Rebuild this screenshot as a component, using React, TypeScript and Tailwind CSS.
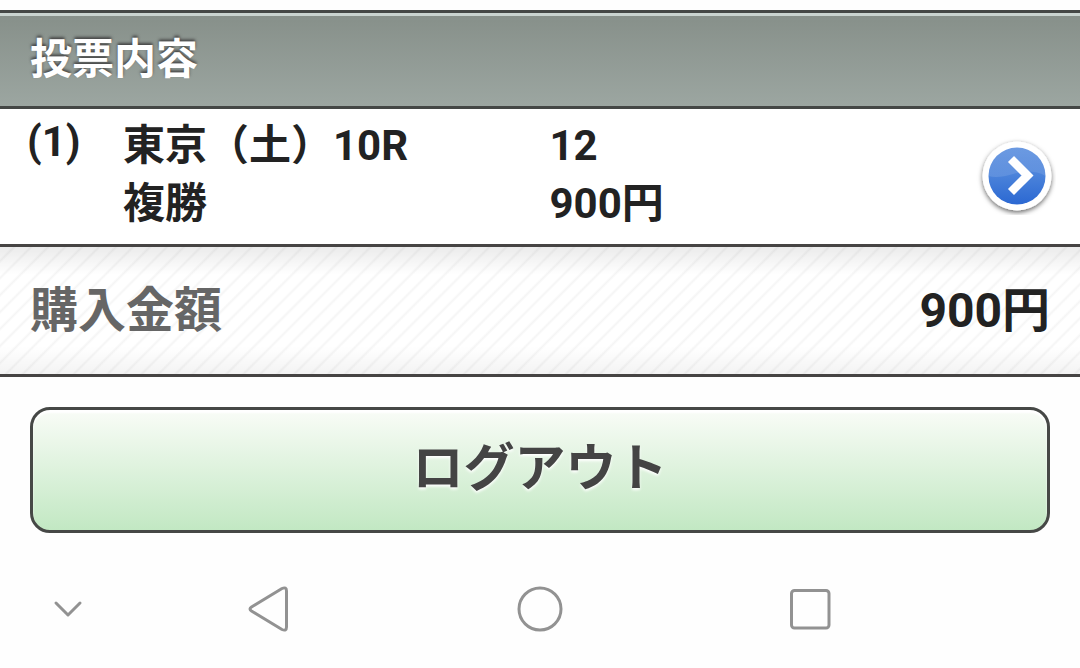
interface Bet {
  no: number;
  race: string;
  horse: string;
  type: string;
  amount: string;
}

const BETS: Bet[] = [
  { no: 1, race: '東京（土）10R', horse: '12', type: '複勝', amount: '900円' },
];

const TOTAL = '900円';

function ArrowIcon() {
  return (
    <svg viewBox="0 0 80 80" className="block w-20 h-20" aria-hidden="true">
      <defs>
        <linearGradient id="ball" x1="0" y1="0" x2="0" y2="1">
          <stop offset="0" stopColor="#6c9ae2" />
          <stop offset="0.5" stopColor="#4a82da" />
          <stop offset="1" stopColor="#2b68d2" />
        </linearGradient>
        <linearGradient id="gloss" x1="0" y1="0" x2="0" y2="1">
          <stop offset="0" stopColor="#ffffff" stopOpacity="0" />
          <stop offset="1" stopColor="#ffffff" stopOpacity="0.12" />
        </linearGradient>
        <filter id="drop" x="-20%" y="-20%" width="140%" height="150%">
          <feDropShadow dx="0" dy="2" stdDeviation="2.5" floodColor="#000000" floodOpacity="0.6" />
        </filter>
      </defs>
      <circle cx="41" cy="41" r="34.5" fill="#ffffff" filter="url(#drop)" />
      <circle cx="41" cy="41" r="28.5" fill="url(#ball)" />
      <path d="M12.500 41a28.500 28.500 0 0 1 57 0C59 35 47 36 37 39S19 43 12.500 41Z" fill="url(#gloss)" />
      <path d="M35 24 51.500 40.500 35 57" fill="none" stroke="#ffffff" strokeWidth="8.5" />
    </svg>
  );
}

export default function App() {
  const navBtn = 'flex justify-center items-center h-16';

  return (
    <div className="min-h-screen bg-[#fefefe] pt-2.5 text-[#222] font-bold font-[Roboto,'Noto_Sans_CJK_JP',sans-serif]">
      {/* Section title */}
      <header className="border-y-3 border-[#444745]">
        <div className="border-t-3 border-[#c9d3cf] bg-linear-to-b from-[#87908a] to-[#9ca6a1] px-[30px] pt-3.5 pb-4">
          <h1 className="text-[42px] leading-[60px] text-white [text-shadow:0_-2px_3px_#444]">投票内容</h1>
        </div>
      </header>

      {/* Bets */}
      <ul>
        {BETS.map(b => (
          <li key={b.no} className="flex items-center border-b-3 border-[#464443] bg-white pl-[27px] pr-6 pt-2 pb-[11px] text-[42px] leading-[58px]">
            <span className="w-24 shrink-0 self-start leading-[50px]">({b.no})</span>
            <div className="grid flex-1 grid-cols-2">
              <span>{b.race}</span>
              <span>{b.horse}</span>
              <span>{b.type}</span>
              <span>{b.amount}</span>
            </div>
            <a href="#detail" aria-label="詳細" className="shrink-0">
              <ArrowIcon />
            </a>
          </li>
        ))}
      </ul>

      {/* Total */}
      <div className="border-b-3 border-[#464443] bg-[linear-gradient(to_bottom,#00000014,transparent_22%,transparent_78%,#0000000c),repeating-linear-gradient(135deg,#fff_0px,#fff_8px,#f5f5f5_10px,#fff_12px)]">
        <dl className="flex items-center justify-between px-[30px] pt-[29px] pb-7 text-[48px] leading-[70px]">
          <dt className="text-[#666]">購入金額</dt>
          <dd>{TOTAL}</dd>
        </dl>
      </div>

      {/* Logout */}
      <div className="px-[30px] pt-[30px] pb-11">
        <button
          type="button"
          className="block w-full rounded-[20px] border-3 border-[#464846] bg-linear-to-b from-[#f9fcf7] to-[#c2e8c3] pt-[23px] pb-[25px] text-[51px] leading-[72px] text-[#444] shadow-[inset_0_3px_2px_#fff] [text-shadow:0_2px_3px_#fff]"
        >
          ログアウト
        </button>
      </div>

      {/* System navigation */}
      <nav className="grid grid-cols-8 text-[#929292]">
        <button type="button" aria-label="閉じる" className={navBtn}>
          <svg width="32" height="24" viewBox="0 0 32 24" fill="none" stroke="currentColor" strokeWidth="3" strokeLinecap="round" strokeLinejoin="round">
            <path d="M4 6 16 18 28 6" />
          </svg>
        </button>
        <button type="button" aria-label="戻る" className={`${navBtn} col-span-2`}>
          <svg width="48" height="48" viewBox="0 0 48 48" fill="none" stroke="currentColor" strokeWidth="3" strokeLinejoin="round">
            <path d="M5.500 22 36 3.500Q40.500 1.500 40.500 6V42Q40.500 46.500 36 44.500L5.500 26Q2.500 24 5.500 22Z" />
          </svg>
        </button>
        <button type="button" aria-label="ホーム" className={`${navBtn} col-span-2`}>
          <svg width="48" height="48" viewBox="0 0 48 48" fill="none" stroke="currentColor" strokeWidth="3">
            <circle cx="24" cy="24" r="21" />
          </svg>
        </button>
        <button type="button" aria-label="アプリ履歴" className={`${navBtn} col-span-2`}>
          <svg width="48" height="48" viewBox="0 0 48 48" fill="none" stroke="currentColor" strokeWidth="3">
            <rect x="5.500" y="5.500" width="37.500" height="37.500" rx="3" />
          </svg>
        </button>
      </nav>
    </div>
  );
}
